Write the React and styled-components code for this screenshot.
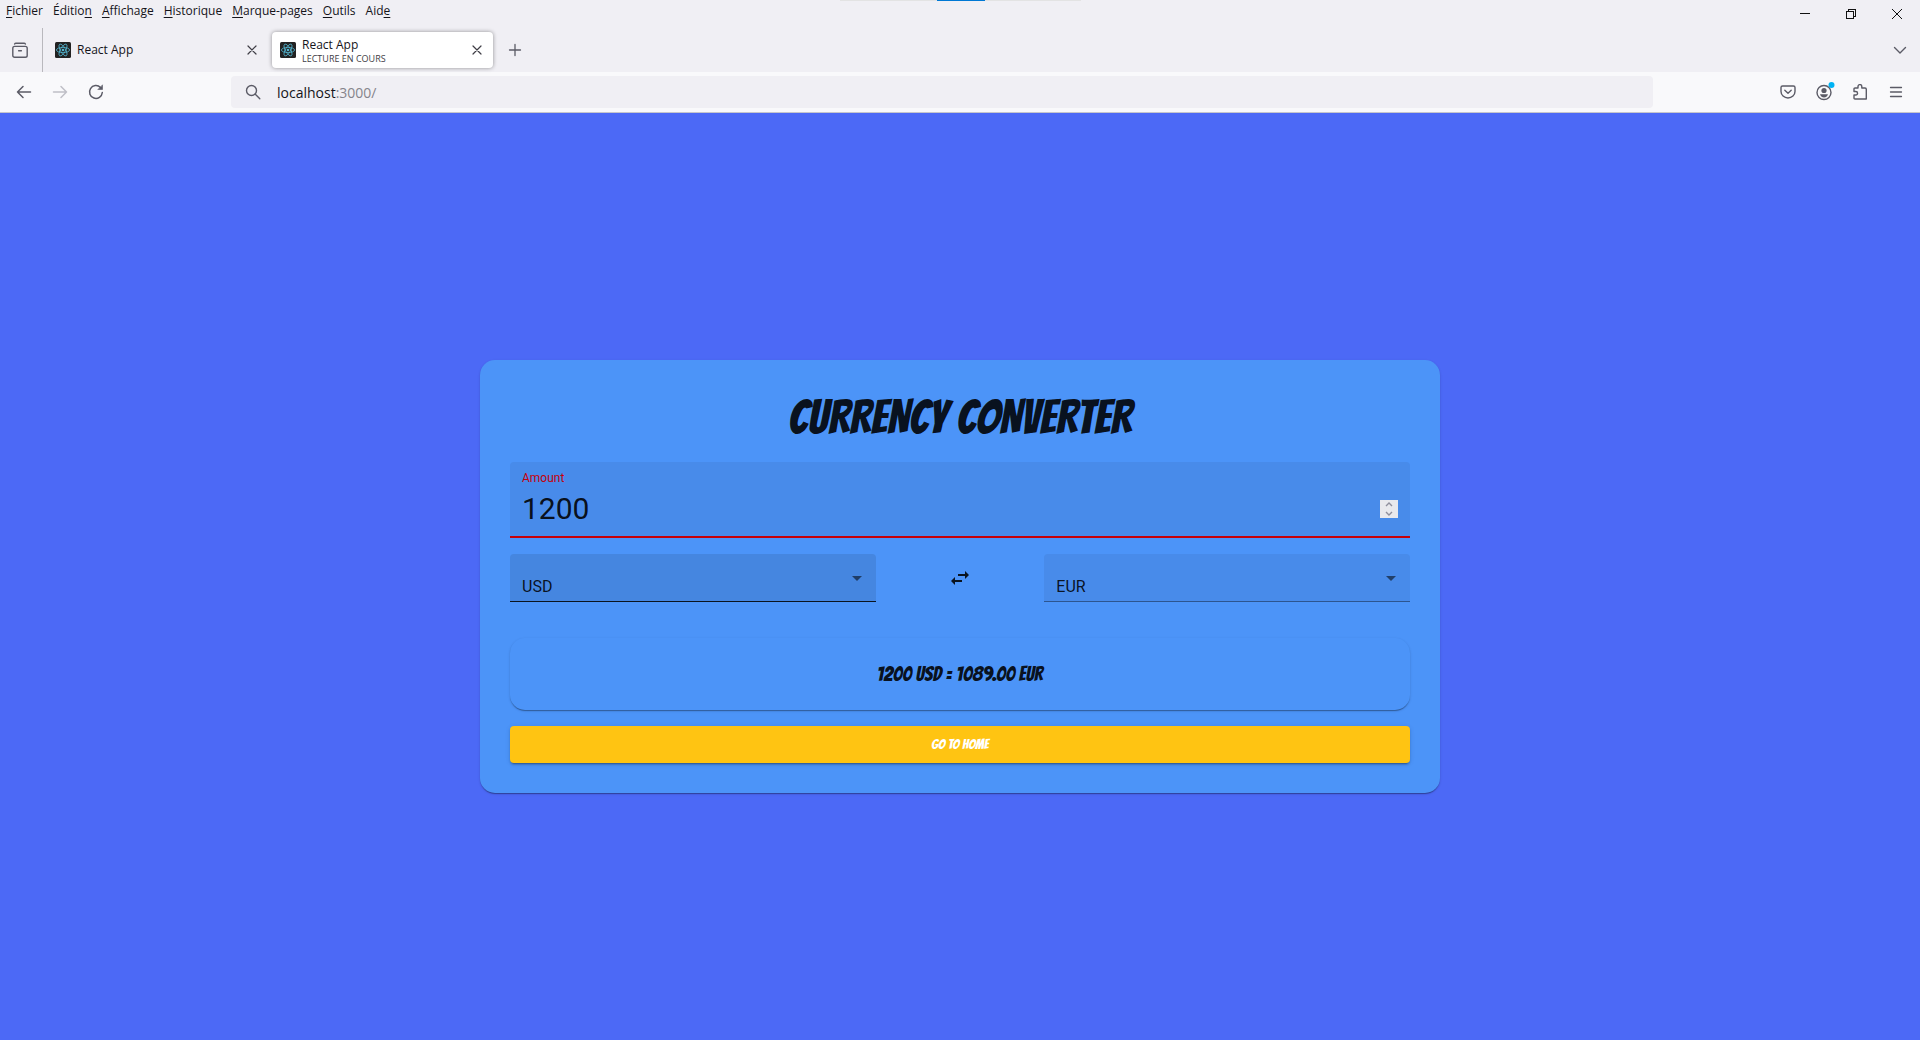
import React, { useId, useState } from "react";
import styled, { createGlobalStyle } from "styled-components";

const uiFont = `"Open Sans", "Noto Sans", sans-serif`;
const formFont = `Roboto, "Liberation Sans", sans-serif`;
const displayFont = `Bangers, "Liberation Sans Narrow", "Roboto Condensed", Roboto, sans-serif`;

const GlobalStyle = createGlobalStyle`
  *, *::before, *::after { box-sizing: border-box; }
  html, body, #root { height: 100%; }
  body { margin: 0; font-family: ${uiFont}; color: #15141a; }
  button { font: inherit; color: inherit; background: none; border: 0; padding: 0; cursor: pointer; }
  svg { display: block; }
`;

const Browser = styled.div`
  display: flex;
  flex-direction: column;
  min-height: 100vh;
`;

const Chrome = styled.header`
  position: relative;
  background: #f0eff4;
`;

const ShareBar = styled.div`
  position: absolute;
  top: 0;
  left: 50%;
  width: 241px;
  height: 1px;
  margin-left: -120px;
  display: flex;
  justify-content: center;
  background: #e3e3e3;
  &::before { content: ""; width: 48px; background: #0078d4; }
`;

const TitleRow = styled.div`
  display: flex;
  justify-content: space-between;
  align-items: flex-start;
  height: 28px;
`;

const MenuBar = styled.nav`
  display: flex;
  gap: 10px;
  padding-left: 6px;
  font-size: 12px;
  u { text-underline-offset: 2px; }
`;

const MenuButton = styled.button`
  line-height: 22px;
  white-space: nowrap;
`;

const WindowControls = styled.div`
  display: flex;
`;

const IconButton = styled.button`
  display: grid;
  place-items: center;
  flex: none;
  width: ${(p) => p.$w || 36}px;
  height: ${(p) => p.$h || 32}px;
  color: ${(p) => p.$color || "#5b5b66"};
`;

const TabStrip = styled.div`
  display: flex;
  align-items: center;
  height: 44px;
  padding-right: 2px;
`;

const OverviewCell = styled.div`
  display: flex;
  align-items: center;
  align-self: stretch;
  width: 43px;
  padding-left: 2px;
  border-right: 1px solid #b9b8bd;
`;

const Tab = styled.div`
  display: flex;
  align-items: center;
  width: 221px;
  height: 36px;
  margin-left: 4px;
  padding: 0 4px 0 8px;
  gap: 6px;
  border-radius: 4px;
  background: ${(p) => (p.$active ? "#fff" : "transparent")};
  box-shadow: ${(p) => (p.$active ? "0 0 4px rgba(0, 0, 0, 0.4)" : "none")};
`;

const TabText = styled.div`
  flex: 1;
  min-width: 0;
  font-size: 12px;
  line-height: 16px;
`;

const TabStatus = styled.div`
  font-size: 9px;
  line-height: 11px;
  color: #3e3d45;
`;

const Spacer = styled.div`
  flex: 1;
`;

const Toolbar = styled.div`
  display: flex;
  align-items: center;
  height: 41px;
  padding: 0 6px;
  background: #f9f9fb;
  border-bottom: 1px solid #c6c6cc;
`;

const UrlBar = styled.div`
  display: flex;
  align-items: center;
  flex: 1;
  height: 32px;
  margin: 0 117px;
  padding-left: 4px;
  gap: 6px;
  border-radius: 4px;
  background: #f0eff4;
  font-size: 14px;
  span { color: #85848b; }
`;

const Main = styled.main`
  flex: 1;
  display: flex;
  align-items: center;
  justify-content: center;
  background: #4c69f6;
  font-family: ${formFont};
`;

const Card = styled.section`
  width: 50%;
  min-width: 480px;
  padding: 30px;
  border-radius: 15px;
  background: #4c94f8;
  color: rgba(0, 0, 0, 0.9);
  box-shadow: 0 2px 1px -1px rgba(0, 0, 0, 0.2), 0 1px 1px rgba(0, 0, 0, 0.14),
    0 1px 3px rgba(0, 0, 0, 0.12);
`;

const Title = styled.h1`
  margin: 0 0 16px;
  font: 400 48px/56px ${displayFont};
  text-align: center;
  text-transform: uppercase;
`;

const AmountField = styled.div`
  display: flex;
  flex-direction: column;
  height: 76px;
  padding: 8px 12px 0;
  border-bottom: 2px solid #c60008;
  border-radius: 4px 4px 0 0;
  background: #488bea;
`;

const AmountLabel = styled.label`
  font-size: 12px;
  line-height: 16px;
  color: #c60008;
`;

const AmountRow = styled.div`
  display: flex;
  align-items: center;
  justify-content: space-between;
  height: 46px;
`;

const AmountInput = styled.input`
  flex: 1;
  min-width: 0;
  padding: 0;
  border: 0;
  outline: 0;
  background: none;
  color: inherit;
  font: 400 30px/40px ${formFont};
  appearance: textfield;
  &::-webkit-inner-spin-button { display: none; }
`;

const Stepper = styled.div`
  display: grid;
  width: 18px;
  height: 18px;
  background: #e9e9ed;
  color: #8f8f9d;
`;

const StepButton = styled.button`
  display: grid;
  place-items: center;
  height: 9px;
`;

const CurrencyRow = styled.div`
  display: grid;
  grid-template-columns: repeat(12, 1fr);
  gap: 16px;
  margin: 16px 0 36px;
`;

const SelectBox = styled.div`
  position: relative;
  grid-column: span 5;
  svg {
    position: absolute;
    right: 7px;
    top: 12px;
    color: rgba(0, 0, 0, 0.54);
    pointer-events: none;
  }
`;

const CurrencySelect = styled.select`
  display: block;
  width: 100%;
  height: 48px;
  padding: 18px 32px 0 12px;
  border: 0;
  border-bottom: 1px solid ${(p) => (p.$hovered ? "#0a1420" : "#2c5590")};
  border-radius: 4px 4px 0 0;
  outline: 0;
  appearance: none;
  background: ${(p) => (p.$hovered ? "#4586e0" : "#488bea")};
  color: rgba(0, 0, 0, 0.87);
  font: 400 16px/24px ${formFont};
`;

const SwapCell = styled.div`
  grid-column: span 2;
  display: grid;
  place-items: center;
`;

const Result = styled.output`
  display: block;
  padding: 24px;
  border-radius: 15px;
  text-align: center;
  font: 400 20px/24px ${displayFont};
  box-shadow: 0 2px 1px -1px rgba(0, 0, 0, 0.2), 0 1px 1px rgba(0, 0, 0, 0.14),
    0 1px 3px rgba(0, 0, 0, 0.12);
  background: #4c94f8;
`;

const HomeButton = styled.button`
  display: block;
  width: 100%;
  height: 37px;
  margin-top: 16px;
  border-radius: 4px;
  background: #ffc412;
  color: #fff;
  font: 400 14px/24px ${displayFont};
  text-transform: uppercase;
  box-shadow: 0 3px 1px -2px rgba(0, 0, 0, 0.2), 0 2px 2px rgba(0, 0, 0, 0.14),
    0 1px 5px rgba(0, 0, 0, 0.12);
`;

const Line = ({ size = 16, w = 1.3, children }) => (
  <svg
    width={size}
    height={size}
    viewBox="0 0 16 16"
    fill="none"
    stroke="currentColor"
    strokeWidth={w}
    strokeLinecap="round"
    strokeLinejoin="round"
    aria-hidden="true"
  >
    {children}
  </svg>
);

const ReactLogo = () => (
  <svg width="16" height="16" viewBox="0 0 16 16" fill="none" stroke="#53b5cf" strokeWidth="0.8" aria-hidden="true">
    <rect width="16" height="16" rx="1.5" fill="#222" stroke="none" />
    <ellipse cx="8" cy="8" rx="6.6" ry="2.6" />
    <ellipse cx="8" cy="8" rx="6.6" ry="2.6" transform="rotate(60 8 8)" />
    <ellipse cx="8" cy="8" rx="6.6" ry="2.6" transform="rotate(120 8 8)" />
    <circle cx="8" cy="8" r="1.3" fill="#53b5cf" stroke="none" />
  </svg>
);

const CloseIcon = () => (
  <Line w={1.2}>
    <path d="M4 4l8 8M12 4l-8 8" />
  </Line>
);

const menus = [
  ["", "F", "ichier"],
  ["Éditio", "n", ""],
  ["", "A", "ffichage"],
  ["", "H", "istorique"],
  ["", "M", "arque-pages"],
  ["", "O", "utils"],
  ["Aid", "e", ""],
];

const rates = { USD: 1, EUR: 0.9075, GBP: 0.78 };

function BrowserTab({ active, status }) {
  return (
    <Tab $active={active}>
      <ReactLogo />
      <TabText>
        React App
        {status && <TabStatus>{status}</TabStatus>}
      </TabText>
      <IconButton $w={24} $h={24} $color="#3f3e46" aria-label="Fermer l’onglet">
        <CloseIcon />
      </IconButton>
    </Tab>
  );
}

function CurrencyPicker({ label, value, onChange, hovered }) {
  return (
    <SelectBox>
      <CurrencySelect aria-label={label} value={value} $hovered={hovered} onChange={(e) => onChange(e.target.value)}>
        {Object.keys(rates).map((code) => (
          <option key={code}>{code}</option>
        ))}
      </CurrencySelect>
      <svg width="24" height="24" viewBox="0 0 24 24" fill="currentColor" aria-hidden="true">
        <path d="M7 10l5 5 5-5z" />
      </svg>
    </SelectBox>
  );
}

export default function App() {
  const [amount, setAmount] = useState(1200);
  const [from, setFrom] = useState("USD");
  const [to, setTo] = useState("EUR");
  const amountId = useId();
  const converted = ((Number(amount) * rates[to]) / rates[from]).toFixed(2);

  const swap = () => {
    setFrom(to);
    setTo(from);
  };

  return (
    <Browser>
      <GlobalStyle />
      <Chrome>
        <ShareBar />
        <TitleRow>
          <MenuBar>
            {menus.map(([before, key, after]) => (
              <MenuButton key={before + key + after}>
                {before}
                <u>{key}</u>
                {after}
              </MenuButton>
            ))}
          </MenuBar>
          <WindowControls>
            <IconButton $w={46} $h={28} $color="#111" aria-label="Réduire">
              <svg width="10" height="10" shapeRendering="crispEdges" aria-hidden="true">
                <path d="M0 4.5h10" stroke="currentColor" />
              </svg>
            </IconButton>
            <IconButton $w={46} $h={28} $color="#111" aria-label="Restaurer">
              <svg width="10" height="10" fill="none" stroke="currentColor" shapeRendering="crispEdges" aria-hidden="true">
                <path d="M.5 2.5h7v7h-7zM2.5 2.5v-2h7v7h-2" />
              </svg>
            </IconButton>
            <IconButton $w={46} $h={28} $color="#111" aria-label="Fermer">
              <svg width="10" height="10" stroke="currentColor" aria-hidden="true">
                <path d="M0 0l10 10M10 0L0 10" />
              </svg>
            </IconButton>
          </WindowControls>
        </TitleRow>
        <TabStrip>
          <OverviewCell>
            <IconButton aria-label="Firefox View">
              <Line w={1.4}>
                <path d="M2.6 2Q3 1.2 4 1.2h8q1 0 1.4.8M2.6 4.4h10.8q1.8 0 1.8 1.8v7.2q0 1.8-1.8 1.8H2.6q-1.8 0-1.8-1.8V6.200q0-1.800 1.800-1.800zM6.600 8.800h2.800" />
              </Line>
            </IconButton>
          </OverviewCell>
          <BrowserTab />
          <BrowserTab active status="LECTURE EN COURS" />
          <IconButton $w={44} aria-label="Nouvel onglet">
            <Line w={1.3}>
              <path d="M8 2.5v11M2.5 8h11" />
            </Line>
          </IconButton>
          <Spacer />
          <IconButton aria-label="Lister tous les onglets">
            <Line w={1.4}>
              <path d="M2.5 5.5L8 11l5.5-5.5" />
            </Line>
          </IconButton>
        </TabStrip>
        <Toolbar>
          <IconButton aria-label="Précédent">
            <Line w={1.5}>
              <path d="M14.5 8h-13M7 2.5L1.5 8 7 13.5" />
            </Line>
          </IconButton>
          <IconButton $color="#bfbfc6" aria-label="Suivant">
            <Line w={1.5}>
              <path d="M1.5 8h13M9 2.5L14.5 8 9 13.5" />
            </Line>
          </IconButton>
          <IconButton aria-label="Actualiser">
            <Line w={1.5}>
              <path d="M14.3 8.5A6.4 6.4 0 1 1 12.5 3.5" />
              <path d="M14.5 1.2v4.3h-4.3z" fill="currentColor" strokeWidth=".6" />
            </Line>
          </IconButton>
          <UrlBar>
            <IconButton aria-label="Rechercher">
              <Line w={1.4}>
                <circle cx="6.5" cy="6.5" r="5" />
                <path d="M10.3 10.3l4.5 4.5" />
              </Line>
            </IconButton>
            <div>
              localhost<span>:3000/</span>
            </div>
          </UrlBar>
          <IconButton aria-label="Pocket">
            <Line w={1.4}>
              <path d="M2.6 2h10.8q1.6 0 1.6 1.6V7.5a7 6.5 0 0 1-14 0V3.6Q1 2 2.6 2z" />
              <path d="M4.8 6.3L8 9.3l3.2-3" />
            </Line>
          </IconButton>
          <IconButton aria-label="Compte">
            <svg width="22" height="20" viewBox="0 0 22 20" fill="none" aria-hidden="true">
              <circle cx="11" cy="10.5" r="7" stroke="currentColor" strokeWidth="1.4" />
              <circle cx="11" cy="8.5" r="2.6" fill="currentColor" />
              <path d="M7 12.3h8q-1.2 3.2-4 3.2t-4-3.2z" fill="currentColor" />
              <circle cx="18.5" cy="3" r="3" fill="#00b3f4" />
            </svg>
          </IconButton>
          <IconButton aria-label="Extensions">
            <Line w={1.4}>
              <path d="M2 6V5q0-1 1-1h3V2.5a1.9 1.9 0 0 1 3.8 0V4H13q1.3 0 1.3 1.3V15H3q-1 0-1-1v-3h1.8a1.7 1.7 0 0 0 0-3.5H2z" />
            </Line>
          </IconButton>
          <IconButton aria-label="Menu">
            <Line w={1.3}>
              <path d="M2.5 3.5h11M2.5 8h11M2.5 12.5h11" />
            </Line>
          </IconButton>
        </Toolbar>
      </Chrome>
      <Main>
        <Card>
          <Title>Currency Converter</Title>
          <AmountField>
            <AmountLabel htmlFor={amountId}>Amount</AmountLabel>
            <AmountRow>
              <AmountInput id={amountId} type="number" value={amount} onChange={(e) => setAmount(e.target.value)} />
              <Stepper>
                <StepButton aria-label="Increase" onClick={() => setAmount(Number(amount) + 1)}>
                  <svg width="8" height="5" fill="none" stroke="currentColor" strokeWidth="1.4" aria-hidden="true">
                    <path d="M1 4l3-3 3 3" />
                  </svg>
                </StepButton>
                <StepButton aria-label="Decrease" onClick={() => setAmount(Number(amount) - 1)}>
                  <svg width="8" height="5" fill="none" stroke="currentColor" strokeWidth="1.4" aria-hidden="true">
                    <path d="M1 1l3 3 3-3" />
                  </svg>
                </StepButton>
              </Stepper>
            </AmountRow>
          </AmountField>
          <CurrencyRow>
            <CurrencyPicker label="From" value={from} onChange={setFrom} hovered />
            <SwapCell>
              <IconButton $w={40} $h={40} $color="#0a1420" aria-label="Swap currencies" onClick={swap}>
                <svg width="24" height="24" viewBox="0 0 24 24" fill="currentColor" aria-hidden="true">
                  <path d="M6.99 11L3 15l3.99 4v-3H14v-2H6.99v-3zM21 9l-3.99-4v3H10v2h7.01v3L21 9z" />
                </svg>
              </IconButton>
            </SwapCell>
            <CurrencyPicker label="To" value={to} onChange={setTo} />
          </CurrencyRow>
          <Result>
            {amount} {from} = {converted} {to}
          </Result>
          <HomeButton>Go to Home</HomeButton>
        </Card>
      </Main>
    </Browser>
  );
}
